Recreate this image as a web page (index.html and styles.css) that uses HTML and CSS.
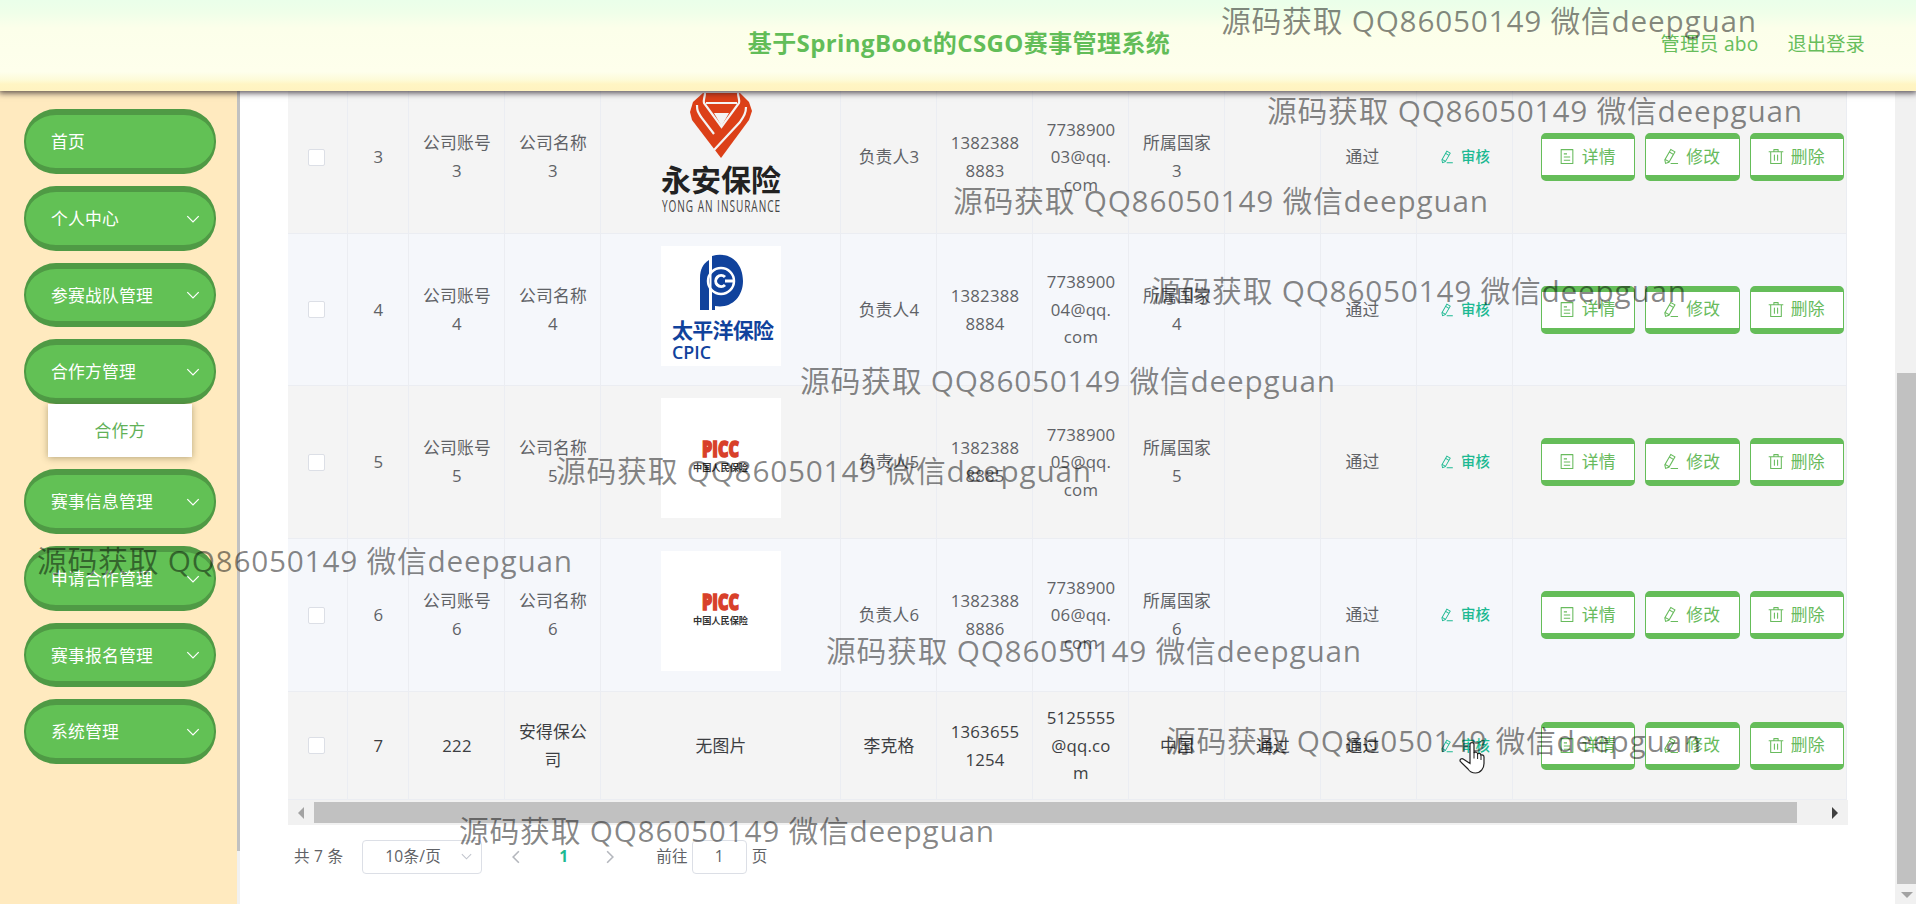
FILE: index.html
```html
<!DOCTYPE html>
<html lang="zh-CN">
<head>
<meta charset="utf-8">
<title>基于SpringBoot的CSGO赛事管理系统</title>
<link rel="stylesheet" href="styles.css">
</head>
<body>
<svg class="defs" width="0" height="0">
  <symbol id="i-edit" viewBox="0 0 1024 1024"><path d="m199.04 672.64 193.984 112 224-387.968-193.92-112-224 388.032zm-23.872 60.16 32.896 148.288 144.896-45.696zM455.04 229.248l193.92 112 56.704-98.112-193.984-112zM104.32 708.8l384-665.024 304.768 175.936L409.152 884.8h.064l-248.448 78.336zm384 254.272v-64h448v64z"/></symbol>
  <symbol id="i-doc" viewBox="0 0 1024 1024"><path d="M192 128v768h640V128H192zm-32-64h704a32 32 0 0 1 32 32v832a32 32 0 0 1-32 32H160a32 32 0 0 1-32-32V96a32 32 0 0 1 32-32zm160 448h384v64H320zm0-192h192v64H320zm0 384h384v64H320z"/></symbol>
  <symbol id="i-del" viewBox="0 0 1024 1024"><path d="M160 256H96a32 32 0 0 1 0-64h256V95.936a32 32 0 0 1 32-32h256a32 32 0 0 1 32 32V192h256a32 32 0 1 1 0 64h-64v672a32 32 0 0 1-32 32H192a32 32 0 0 1-32-32zm448-64v-64H416v64zM224 896h576V256H224zm192-128a32 32 0 0 1-32-32V416a32 32 0 0 1 64 0v320a32 32 0 0 1-32 32m192 0a32 32 0 0 1-32-32V416a32 32 0 0 1 64 0v320a32 32 0 0 1-32 32"/></symbol>
  <symbol id="i-down" viewBox="0 0 14 14"><path d="M2 4.500 7 9.500 12 4.500" fill="none" stroke="currentColor" stroke-width="1.100"/></symbol>
</svg>
<header class="top">
  <h1>基于SpringBoot的CSGO赛事管理系统</h1>
  <nav class="user"><span>管理员 abo</span><span>退出登录</span></nav>
</header>
<div class="body">
  <aside class="side">
    <ul class="menu" id="menu"></ul>
    <div class="side-bar"><div class="side-thumb"></div></div>
  </aside>
  <main class="main">
    <div class="table" id="table"></div>
    <div class="hbar"><i class="arr left"></i><div class="hthumb"></div><i class="arr right"></i></div>
    <div class="pager">
      <span class="total">共 7 条</span>
      <span class="size"><b>10条/页</b><svg class="ic"><use href="#i-down"/></svg></span>
      <svg class="pg" viewBox="0 0 14 14"><path d="M9.500 2 4.500 7 9.500 12"/></svg>
      <span class="cur">1</span>
      <svg class="pg" viewBox="0 0 14 14"><path d="M4.500 2 9.500 7 4.500 12"/></svg>
      <span class="goto">前往</span><span class="num">1</span><span class="ye">页</span>
    </div>
  </main>
  <div class="vbar"><div class="vthumb"></div><i class="arr down"></i></div>
</div>
<div id="marks"></div>
<svg class="cursor" width="27" height="34" viewBox="0 0 27 34"><path d="M11 3.500c0-2.600 4-2.600 4 0v8.500c.6-1.300 3.400-1 3.600.8 1-1 3.200-.5 3.300 1.300 1.200-.6 3.100 0 3.100 2v6.500c0 4.500-3 9.400-8.500 9.400-4 0-6-1.600-7.500-4L1.300 20.500c-1-2 1.400-3.800 3.300-2.200L11 22.500z" fill="#fff" stroke="#222" stroke-width="1.200"/><path d="M15 11.500v6M18.600 13v5M22 14.500v4.500" stroke="#222" fill="none"/></svg>
<script src="app.js"></script>
</body>
</html>
```
FILE: styles.css
```css
*{box-sizing:border-box}
html,body{margin:0;height:100%;overflow:hidden}
body{width:1916px;height:904px;position:relative;background:#fff;font:16.8px/27.6px "Open Sans","Noto Sans CJK SC",sans-serif;letter-spacing:.2px;color:#606266;display:flex;flex-direction:column}
.defs{position:absolute}
svg{fill:currentColor}
.top{height:91px;flex:none;position:relative;z-index:2;display:grid;grid-template-columns:1fr auto 1fr;align-items:center;padding:0 51px 5px 53px;background:linear-gradient(#eaffea 0,#efffe9 12px,#fcffea 28px,#feffec 72px,#fdfbd8 80px,#fff5c4 84px,#fff3c0 91px);box-shadow:0 1px 6px 1px rgba(30,20,30,.75);color:#67bd5b}
.top h1{grid-column:2;margin:0;font-size:24px;line-height:36px;font-weight:700;letter-spacing:.4px;white-space:nowrap;color:#62bd58}
.user{display:flex;justify-content:flex-end;gap:29px;font-size:19.2px;white-space:nowrap;padding-top:1px}
.body{flex:1;display:flex;min-height:0}
.side{width:240px;display:flex;background:#ffeabf}
.menu{list-style:none;margin:0;padding:18px 21px 0 24px;width:237px;flex:none}
.menu li{margin-bottom:12px}
.pill{height:64.8px;border:solid #4f9a45;border-width:6px 2px;border-radius:32px;background:#62c155;color:#fff;display:flex;align-items:center;justify-content:space-between;padding:1px 13px 0 25px}
.pill .ic{width:16px;height:16px}
.sub{height:52.8px;margin:0 24px;background:#fff;color:#62b158;display:flex;align-items:center;justify-content:center;box-shadow:0 1px 7px rgba(90,80,40,.45)}
.side-bar{width:3px;background:#f1f1f1}
.side-thumb{height:760px;background:#c1c1c1}
.main{flex:1;padding-left:48px;min-width:0}
.table{width:1559px;height:709px;display:flex;flex-direction:column;justify-content:flex-end;overflow:hidden}
.row{flex:none;display:grid;grid-template-columns:60px 61px 96px 96px 240px repeat(7,96px) 334px;background:#f4f4f4}
.row.alt{background:#f5f7fb}
.row.cur-row{color:#3c3e42}
.cell{border:solid #ebedf2;border-width:0 1px 1px 0;display:flex;align-items:center;justify-content:center;text-align:center;padding:0 11px 0 12px;min-width:0}
.cell:nth-child(11){padding-right:24px}
.cell p{margin:0;word-break:break-all}
.box{width:17px;height:17px;border:1px solid #dcdfe6;border-radius:2px;background:#fff;margin-right:4px}
.logo{width:120px;height:120px;flex:none;display:block;margin-bottom:8px;letter-spacing:0}
.audit{color:#1cb992;font-size:14.4px;font-weight:500;letter-spacing:0;display:flex;align-items:center;gap:7px;white-space:nowrap}
.audit svg{width:14px;height:14px}
.acts{padding:0 2px 0 0;justify-content:flex-end;gap:10px}
.btn{width:94.5px;height:48px;flex:none;border:solid #65bd59;border-width:6px 1px;border-radius:5px;background:#fff;color:#68bb5d;display:flex;align-items:center;justify-content:center;gap:6px;white-space:nowrap;padding:0 2px 1px 0}
.btn svg{width:18px;height:17px}
.hbar{width:1560px;height:25px;background:#f1f1f1;display:flex;align-items:center;padding:0 10px}
.hthumb{width:1483px;height:21px;background:#c1c1c1;margin:0 auto 0 10px}
.arr{width:0;height:0;border:6px solid transparent}
.left{border-width:6px 6px 6px 0;border-right-color:#a3a3a3}
.right{border-width:6px 0 6px 6px;border-left-color:#404040}
.down{border-width:6px 6px 0;border-top-color:#a3a3a3}
.pager{display:flex;align-items:center;height:63px;padding-left:6px;font-size:15.6px}
.size{width:120px;height:34px;border:1px solid #dcdfe6;border-radius:4px;margin-left:19px;display:flex;align-items:center;justify-content:space-between;padding:0 8px 0 22px}
.size b{font-weight:400}
.size .ic{width:13px;height:13px;color:#c0c4cc}
.pg{width:16px;height:16px;margin-left:26px;fill:none;stroke:#b4b7bd;stroke-width:1.4}
.cur{color:#1cb992;font-weight:700;margin-left:35px;width:10px}
.cur+.pg{margin-left:33px}
.goto{margin-left:38px}
.num{width:55px;height:34px;border:1px solid #dcdfe6;border-radius:4px;margin:0 5px 0 4px;text-align:center;line-height:31px}
.vbar{width:21px;background:#f1f1f1;display:flex;flex-direction:column;align-items:flex-end;padding:282px 0 4px 2px;justify-content:space-between}
.vthumb{width:19px;height:511px;background:#c1c1c1}
.vbar .arr{margin-right:3px;margin-bottom:2px}
.mark{position:absolute;z-index:5;font-size:29.8px;line-height:44px;color:rgba(0,0,0,.47);white-space:pre;letter-spacing:.76px}
.cursor{position:absolute;z-index:6;left:1459px;top:741px}
```
FILE: app.js
```js
const menu = ['首页', '个人中心', '参赛战队管理', '合作方管理', '赛事信息管理', '申请合作管理', '赛事报名管理', '系统管理'];
document.getElementById('menu').innerHTML = menu.map((m, i) =>
  `<li><div class="pill"><span>${m}</span>${i ? '<svg class="ic"><use href="#i-down"/></svg>' : ''}</div>${i === 3 ? '<div class="sub">合作方</div>' : ''}</li>`).join('');

const cjk = 'font-family="Noto Sans CJK SC"';
const yongan = `<svg class="logo" viewBox="0 0 120 120">
<path d="M42 0h37l9 9 3 9-3 9-28 38L31 27l-2-8 3-10z" fill="#dc4018"/>
<path d="M53 20h15l-7.500 13z" fill="#f4f4f4"/>
<path d="M44 0c0 4-2 7-1 10l17.500 24L78 10c1-3-1-6-1-10M45 10h31M36 12c0 6 1 7 4 12l13 17M85 14c0 6-2 9-6 15L53 57" fill="none" stroke="#f4f4f4" stroke-width="2.2"/>
<text x="0" y="98" textLength="120" font-size="30" font-weight="700" ${cjk} fill="#222">永安保险</text>
<text x="1" y="119" textLength="119" lengthAdjust="spacingAndGlyphs" font-size="15.500" font-family="Open Sans" fill="#444" style="letter-spacing:1.5px">YONG AN INSURANCE</text></svg>`;
const cpic = `<svg class="logo" viewBox="0 0 120 120"><path fill="#fff" d="M0 0h120v120H0z"/>
<path d="M48 14v50h-9V32c0-9 3-14 9-18z" fill="#10429c"/><path d="M51 10c18-5 31 7 31 25 0 17-13 28-28 25v4h-3z" fill="#10429c"/>
<circle cx="60" cy="35" r="13" fill="#10429c" stroke="#fff" stroke-width="2.5"/><circle cx="60" cy="35" r="7" fill="none" stroke="#fff" stroke-width="0"/><path d="M64 31a5.500 5.500 0 1 0 0 8M64 35h9" fill="none" stroke="#fff" stroke-width="3"/><path d="M49.500 12v52" stroke="#fff" stroke-width="2"/>
<text x="11" y="92" textLength="102" font-size="21" font-weight="700" ${cjk} fill="#10429c">太平洋保险</text>
<text x="11" y="113" textLength="39" lengthAdjust="spacingAndGlyphs" font-size="18" font-weight="600" font-family="Open Sans" fill="#10429c">CPIC</text></svg>`;
const picc = `<svg class="logo" viewBox="0 0 120 120"><path fill="#fff" d="M0 0h120v120H0z"/>
<text x="41" y="59" textLength="37" lengthAdjust="spacingAndGlyphs" font-size="23" font-weight="800" font-family="Open Sans" fill="#d8402a" stroke="#d8402a" stroke-width="1.6">PICC</text>
<text x="32" y="73" textLength="55" font-size="9.2" font-weight="700" ${cjk} fill="#333">中国人民保险</text></svg>`;

const ic = n => `<svg><use href="#i-${n}"/></svg>`;
const common = n => [`公司账号<br>${n}`, `公司名称<br>${n}`];
const std = (n, logo) => [n, ...common(n), logo, `负责人${n}`, `1382388<br>888${n}`, `7738900<br>0${n}@qq.<br>com`, `所属国家<br>${n}`, '', '通过'];
const rows = [
  [153, std(3, yongan)], [152, std(4, cpic)], [153, std(5, picc)], [153, std(6, picc)],
  [108, [7, '222', '安得保公<br>司', '无图片', '李克格', '1363655<br>1254', '5125555<br>@qq.co<br>m', '中国', '通过', '通过']]
];
document.getElementById('table').innerHTML = rows.map(([h, cells], i) =>
  `<div class="row${i % 2 ? ' alt' : ''}${i === 4 ? ' cur-row' : ''}" style="height:${h}px"><div class="cell"><i class="box"></i></div>` +
  cells.map(c => `<div class="cell">${String(c).startsWith('<svg') ? c : `<p>${c}</p>`}</div>`).join('') +
  `<div class="cell"><span class="audit">${ic('edit')}审核</span></div>` +
  `<div class="cell acts"><span class="btn">${ic('doc')}详情</span><span class="btn">${ic('edit')}修改</span><span class="btn">${ic('del')}删除</span></div></div>`).join('');

const marks = [[1221, -1], [1267, 89], [953, 179], [1151, 269], [800, 359], [556, 449], [37, 539], [826, 629], [1166, 719], [459, 809]];
document.getElementById('marks').innerHTML = marks.map(([x, y]) =>
  `<div class="mark" style="left:${x}px;top:${y}px">源码获取 QQ86050149 微信deepguan</div>`).join('');
```
